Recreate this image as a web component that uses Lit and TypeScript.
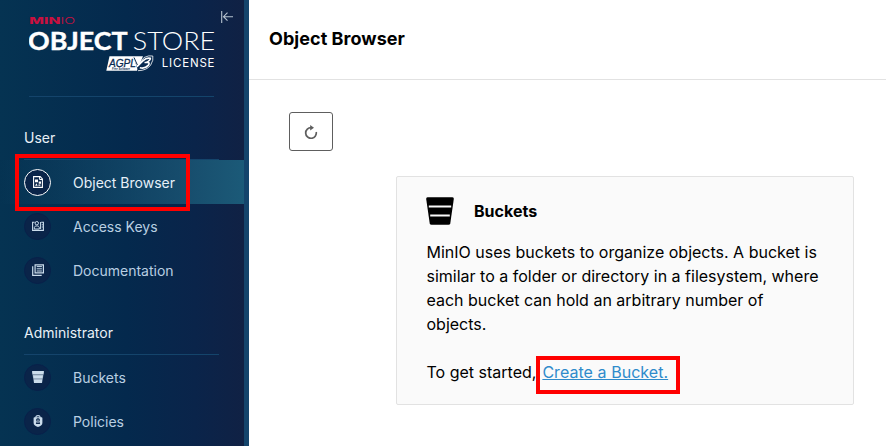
import { LitElement, html, css, svg } from "lit";
import { customElement, property } from "lit/decorators.js";

const icons: Record<string, unknown> = {
  browser: svg`<path d="M1.6 .65H8.2L10.4 2.9V11.35H1.6Z" fill="none" stroke="currentColor" stroke-width="1.1"/>
    <path d="M7.6 .8V3.5H10.6" fill="none" stroke="currentColor" stroke-width="1"/>
    <path d="M3 3.4H6V6.2H3ZM6.7 5.6H9V7.7H6.7ZM3.1 9.7L4.4 7.2L5.7 9.7ZM6.4 8.4H8.4V9.7H6.4Z"/>`,
  keys: svg`<path d="M2.6 2.2H.6V10.4H11.4V2.2H9.2" fill="none" stroke="currentColor" stroke-width="1.1"/>
    <circle cx="4.8" cy="3.2" r="1.7" fill="none" stroke="currentColor" stroke-width="1"/>
    <path d="M2.3 9V7.6C2.3 5.4 7.3 5.4 7.3 7.6V9Z" fill="none" stroke="currentColor" stroke-width="1"/>
    <path d="M8.1 1.9H9.1V8.9H8.1ZM9.8 4.2H10.8V5.2H9.8ZM9.8 6.5H10.8V7.5H9.8Z"/>`,
  docs: svg`<path d="M3.1 .9H11.4V8.9H3.1Z" fill="none" stroke="currentColor" stroke-width="1.2"/>
    <path d="M.7 2.3V11.3H9.7" fill="none" stroke="currentColor" stroke-width="1.2"/>
    <path d="M4.7 2.6H9.9M4.7 4.8H9.9M4.7 7H9.9" stroke="currentColor" stroke-width="1"/>`,
  bucket: svg`<path d="M.5 0H11.5Q12 0 12 .5L11.6 3.5H.4L0 .5Q0 0 .5 0ZM1 4.2H11L10.6 7.5H1.4ZM1.5 8.2H10.5L10.1 11.5Q10 12 9.5 12H2.5Q2 12 1.9 11.5Z"/>
    <path d="M.4 3.4H11.6L10.6 8.6H1.4Z" opacity=".5"/>`,
  policy: svg`<path d="M3.9 3V2Q3.9 .6 6 .6T8.1 2V3" fill="none" stroke="currentColor" stroke-width="1.1"/>
    <path fill-rule="evenodd" d="M2.4 2.2H9.6Q10.4 2.2 10.4 3.2V7.8Q10.4 10.8 6 12Q1.6 10.8 1.6 7.8V3.2Q1.6 2.2 2.4 2.2ZM6 3.2A1.8 1.8 0 0 0 4.8 6.4L3.8 9H8.2L7.2 6.4A1.8 1.8 0 0 0 6 3.2Z"/><path d="M5.5 4.4H6.5V8H5.5Z"/>`,
};

@customElement("nav-item")
class NavItem extends LitElement {
  @property() icon = "";
  @property() label = "";
  @property({ type: Boolean, reflect: true }) active = false;

  static styles = css`
    :host { display: flex; align-items: center; height: 44px; padding-left: 24px; color: #b9cfe2; font-size: 14px; }
    :host([active]) { color: #e6f0f8; background: linear-gradient(90deg, rgba(27, 85, 117, 0) 0%, #1b5a78 100%); }
    .disc { box-sizing: border-box; width: 27px; height: 27px; border-radius: 50%; background: #0a2449; border: 1px solid #08204a; display: grid; place-items: center; margin: 1px 22px 0 0; color: #cbdcec; }
    :host([active]) .disc { border-color: #fff; color: #fff; }
    svg { display: block; fill: currentColor; margin-top: -1px; }
  `;

  render() {
    return html`<span class="disc"><svg width="12" height="12" viewBox="0 0 12 12">${icons[this.icon]}</svg></span>
      <span>${this.label}</span>`;
  }
}

@customElement("store-logo")
class StoreLogo extends LitElement {
  static styles = css`
    :host { display: block; height: 60px; }
    svg { display: block; }
    .brand { font: 800 9.6px Inter, sans-serif; fill: #c9103f; }
    .thin { font-weight: 300; }
    .object { font: 700 25px Lato, sans-serif; fill: #fff; stroke: #fff; stroke-width: 0.4px; }
    .store { font: 300 25px Lato, sans-serif; fill: #fff; }
    .license { font: 400 11.5px Inter, sans-serif; fill: #fff; }
    .agpl { font: italic 400 11.5px "Liberation Sans", sans-serif; fill: #082a50; stroke: #082a50; stroke-width: 0.3px; }
    .tiny { font: italic 700 3.5px "Liberation Sans", sans-serif; fill: #082a50; }
  `;

  render() {
    return html`<svg width="186" height="60" viewBox="29 14 186 60">
      <text class="brand" x="29.3" y="24.4" textLength="31" lengthAdjust="spacingAndGlyphs">MIN</text>
      <text class="brand thin" x="60.4" y="24.4" textLength="14.7" lengthAdjust="spacingAndGlyphs">IO</text>
      <text class="object" x="28" y="49.6" textLength="99.5" lengthAdjust="spacingAndGlyphs">OBJECT</text>
      <text class="store" x="132.8" y="49.7" textLength="82.5" lengthAdjust="spacingAndGlyphs">STORE</text>
      <path d="M109.5 56.3H143L137 70.8H106.3Z" fill="#fff"/>
      <text class="agpl" x="109" y="66.5" textLength="27" lengthAdjust="spacingAndGlyphs">AGPL</text>
      <text class="tiny" x="112" y="69.8" textLength="18" lengthAdjust="spacingAndGlyphs">Free Software</text>
      <path d="M134 58.5L138 66L144 57.5Q149 55 152.8 56Q153.8 60 150.7 65Q147 70.5 138 70.7" fill="#082a50" stroke="#fff" stroke-width=".8"/>
      <path d="M134.2 57.5L137.6 66L142.8 60.8Q146.8 57.4 150.3 58.4Q150.5 60.5 146.2 62.5Q150.8 62.1 148.2 65.4Q145 69 139.8 67.7M144.5 62.5H147" fill="none" stroke="#fff" stroke-width="1.7"/>
      <path d="M134 57.5L137.4 65" stroke="#082a50" stroke-width="1"/>
      <text class="license" x="161.8" y="67" textLength="52.7">LICENSE</text>
    </svg>`;
  }
}

@customElement("app-root")
class AppRoot extends LitElement {
  static styles = css`
    :host { display: flex; position: relative; width: 886px; height: 446px; overflow: hidden; background: #fff; color: #000; font-family: Inter, sans-serif; }
    .sidebar { box-sizing: border-box; width: 249px; flex: none; border-right: 5px solid #14446b; background: linear-gradient(90deg, #053352 0%, #04294d 52%, #0a244a 80%, #102144 100%) padding-box; position: relative; }
    .top { height: 97px; box-sizing: border-box; margin: 0 30px 0 29px; padding-top: 14px; border-bottom: 1px solid #14446b; }
    .collapse { position: absolute; left: 221px; top: 11px; }
    .group { box-sizing: border-box; height: 63px; margin: 0 25px 0 24px; padding-top: 31px; border-bottom: 1px solid #14446b; color: #e8f0f7; font-size: 14px; line-height: 20px; letter-spacing: 0.02px; }
    main { flex: 1; display: flex; flex-direction: column; align-items: flex-start; }
    header { box-sizing: border-box; width: 100%; height: 80px; padding: 27px 20px 0; border-bottom: 1px solid #e2e2e2; font-weight: 700; font-size: 18px; line-height: 24px; letter-spacing: 0.05px; }
    .refresh { box-sizing: border-box; width: 44px; height: 39px; margin: 32px 0 0 40px; padding: 0; border: 1px solid #5e5e5e; border-radius: 3px; background: #fff; display: grid; place-items: center; }
    .card { box-sizing: border-box; width: 458px; height: 229px; margin: 25px 0 0 147px; padding: 20px 29.5px; border: 1px solid #e2e2e2; border-radius: 2px; background: #fafafa; font-size: 16px; line-height: 24px; }
    .title { display: flex; align-items: center; gap: 20px; height: 28px; margin-bottom: 15px; font-weight: 700; }
    .title svg { margin: -1px 0 0 -.5px; }
    p { margin: 0 0 24px; }
    a { margin-left: 1.5px; color: #2e8bcb; text-decoration: underline; letter-spacing: 0.05px; }
    .mark { position: absolute; box-sizing: border-box; border: 4px solid #f00; }
    .mark.nav { left: 15px; top: 154px; width: 175px; height: 57px; }
    .mark.link { left: 536px; top: 356px; width: 144px; height: 38px; }
  `;

  render() {
    return html`
      <nav class="sidebar">
        <div class="top"><store-logo></store-logo></div>
        <svg class="collapse" width="12" height="12" viewBox="0 0 12 12" fill="none" stroke="#b7c3d0" stroke-width="1.1"><path d="M.7 0V12M2.5 5.7H12M6.5 1.7L2.5 5.7L6.5 9.7"/></svg>
        <div class="group">User</div>
        <nav-item icon="browser" label="Object Browser" active></nav-item>
        <nav-item icon="keys" label="Access Keys"></nav-item>
        <nav-item icon="docs" label="Documentation"></nav-item>
        <div class="group">Administrator</div>
        <nav-item icon="bucket" label="Buckets"></nav-item>
        <nav-item icon="policy" label="Policies"></nav-item>
      </nav>
      <main>
        <header>Object Browser</header>
        <button class="refresh" aria-label="Refresh">
          <svg width="14" height="14" viewBox="0 0 14 14"><path d="M7.3 2.7A5.3 5.3 0 1 0 12.2 7" fill="none" stroke="#5e5e5e" stroke-width="1.7"/><path d="M6.2 0L10 2.8L6.2 5.6Z" fill="#5e5e5e"/></svg>
        </button>
        <section class="card">
          <div class="title">
            <svg width="28" height="28" viewBox="0 0 28 28"><path d="M1.5 .3H26.5Q28 .5 27.8 2L24.3 26.2Q24 27.7 22.5 27.7H5.5Q4 27.7 3.7 26.2L.2 2Q0 .5 1.5 .3Z"/><path d="M2.8 9.6H25.2M4.2 18.4H23.8" stroke="#fafafa" stroke-width="2"/></svg>
            <span>Buckets</span>
          </div>
          <p>MinIO uses buckets to organize objects. A bucket is similar to a folder or directory in a filesystem, where each bucket can hold an arbitrary number of objects.</p>
          <p>To get started, <a>Create a Bucket.</a></p>
        </section>
      </main>
      <div class="mark nav"></div>
      <div class="mark link"></div>
    `;
  }
}
